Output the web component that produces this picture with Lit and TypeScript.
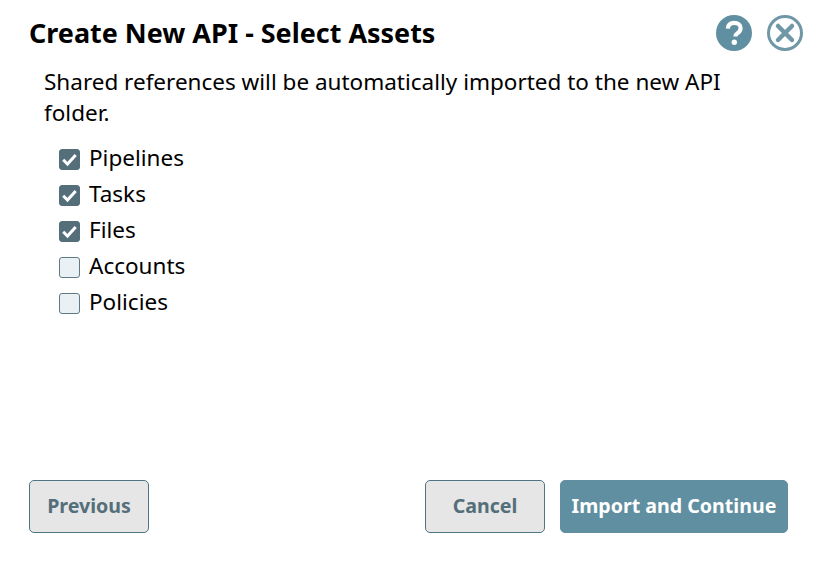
import { LitElement, html, css } from "lit";
import { customElement } from "lit/decorators.js";

const ITEMS: [string, boolean][] = [
  ["Pipelines", true],
  ["Tasks", true],
  ["Files", true],
  ["Accounts", false],
  ["Policies", false],
];

@customElement("app-root")
export class AppRoot extends LitElement {
  static styles = css`
    :host {
      display: block;
      width: 817px;
      height: 562px;
      background: #fff;
      font-family: "Noto Sans", sans-serif;
      color: #000;
      overflow: hidden;
    }
    .dialog {
      box-sizing: border-box;
      height: 562px;
      padding: 14px 14px 29px 29px;
      display: flex;
      flex-direction: column;
    }
    .head {
      display: flex;
      align-items: center;
      justify-content: space-between;
      height: 38px;
    }
    h1 {
      margin: 0;
      font-size: 26.95px;
      line-height: 38px;
      font-weight: 700;
    }
    .icons {
      display: flex;
      gap: 15px;
      align-items: center;
    }
    .icons svg {
      display: block;
      width: 36px;
      height: 36px;
    }
    .body {
      flex: 1;
      padding: 14px 60px 0 15px;
    }
    p {
      margin: 0;
      font-size: 22.5px;
      line-height: 31px;
    }
    .list {
      margin-top: 11px;
      padding-left: 15px;
      display: flex;
      flex-direction: column;
    }
    .row {
      display: flex;
      align-items: center;
      gap: 9px;
      height: 36px;
      font-size: 22.5px;
    }
    .box {
      box-sizing: border-box;
      width: 21px;
      height: 21px;
      border-radius: 3px;
      border: 1px solid #5e7a87;
      background: #eaf1f4;
      flex: none;
      margin-top: 5px;
    }
    .box.on {
      background: #546e7a;
      border-color: #546e7a;
    }
    .box svg {
      display: block;
      width: 19px;
      height: 19px;
    }
    .foot {
      display: flex;
      align-items: stretch;
      padding-right: 15px;
    }
    .spacer {
      flex: 1;
    }
    button {
      box-sizing: border-box;
      height: 53px;
      font: 700 19.6px "Noto Sans", sans-serif;
      border-radius: 5px;
      padding: 0 0 2px;
      cursor: pointer;
    }
    .sec {
      width: 120px;
      background: #e6e6e6;
      border: 1px solid #4f7585;
      color: #546e7a;
    }
    .pri {
      width: 228px;
      margin-left: 15px;
      background: #5f8fa0;
      border: 1px solid #5f8fa0;
      color: #fff;
    }
  `;

  render() {
    return html`
      <div class="dialog">
        <div class="head">
          <h1>Create New API - Select Assets</h1>
          <div class="icons">
            <svg viewBox="0 0 36 36" aria-label="Help">
              <circle cx="18" cy="18" r="18" fill="#5f8fa0" />
              <path d="M11.800 13.600c.3-3.600 2.800-5.700 6.400-5.700 3.800 0 6.400 2.100 6.400 5.300 0 2.400-1.300 3.700-3 4.900-1.600 1.100-2.200 1.900-2.200 3.500" fill="none" stroke="#fff" stroke-width="4.200" />
              <circle cx="18.300" cy="27.300" r="2.700" fill="#fff" />
            </svg>
            <svg viewBox="0 0 36 36" aria-label="Close">
              <circle cx="18" cy="18" r="16.500" fill="none" stroke="#6f97a6" stroke-width="3" />
              <path d="M11 11l14 14M25 11L11 25" fill="none" stroke="#6f97a6" stroke-width="4.500" stroke-linecap="round" />
            </svg>
          </div>
        </div>
        <div class="body">
          <p>Shared references will be automatically imported to the new API folder.</p>
          <div class="list">
            ${ITEMS.map(
              ([label, on]) => html`
                <div class="row">
                  <span class="box ${on ? "on" : ""}">
                    ${on
                      ? html`<svg viewBox="0 0 19 19"><path d="M3.200 9.800l4.300 4.200 8.200-9" fill="none" stroke="#fff" stroke-width="3" /></svg>`
                      : ""}
                  </span>
                  <span>${label}</span>
                </div>
              `
            )}
          </div>
        </div>
        <div class="foot">
          <button class="sec">Previous</button>
          <span class="spacer"></span>
          <button class="sec">Cancel</button>
          <button class="pri">Import and Continue</button>
        </div>
      </div>
    `;
  }
}
